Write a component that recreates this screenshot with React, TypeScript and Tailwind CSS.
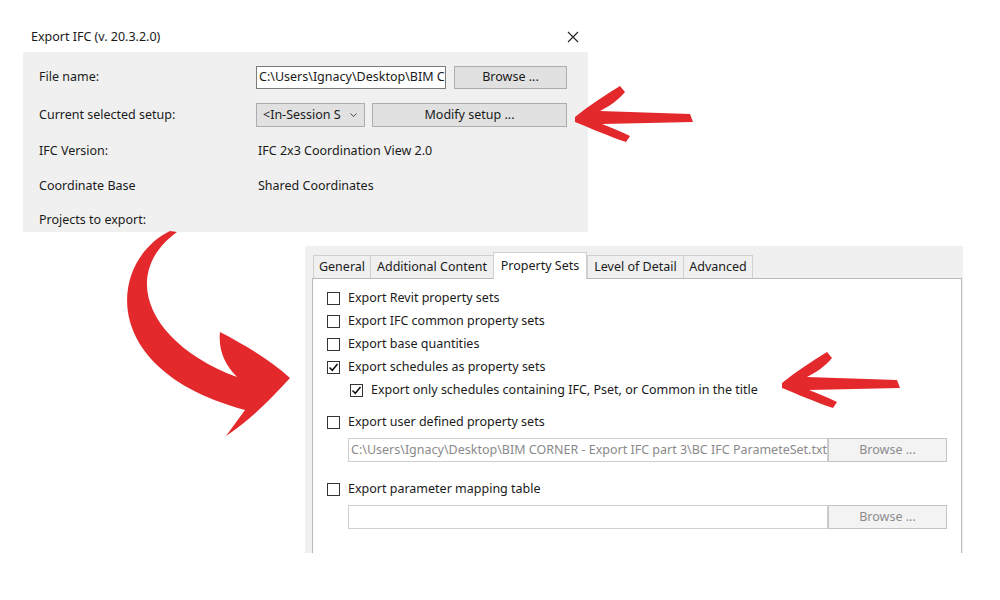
const font = { fontFamily: '"Segoe UI", "Noto Sans", sans-serif' }

function CheckBox({ checked }: { checked?: boolean }) {
  return (
    <span className="flex h-[13px] w-[13px] shrink-0 items-center justify-center border border-[#333] bg-white">
      {checked && (
        <svg width="11" height="11" viewBox="0 0 11 11">
          <path d="M1.5 5.5 L4.3 8.3 L9.5 2" fill="none" stroke="#111" strokeWidth="1.5" />
        </svg>
      )}
    </span>
  )
}

function CheckRow({ label, checked, indent }: { label: string; checked?: boolean; indent?: boolean }) {
  return (
    <div className={`flex h-[23px] items-center gap-[8px] ${indent ? 'pl-[23px]' : ''}`}>
      <CheckBox checked={checked} />
      <span className="whitespace-nowrap">{label}</span>
    </div>
  )
}

function PathField({ value }: { value: string }) {
  return (
    <div className="ml-[21px] flex h-[24px] w-[599px]">
      <div className="flex w-[480px] items-center overflow-hidden whitespace-nowrap border border-[#cfcfcf] bg-white px-[2px] text-[#8a8a8a]">
        {value}
      </div>
      <div className="flex w-[119px] items-center justify-center border border-[#c4c4c4] bg-[#f3f3f3] text-[#8c8c8c]">
        Browse ...
      </div>
    </div>
  )
}

const tabs = ['General', 'Additional Content', 'Property Sets', 'Level of Detail', 'Advanced']
const tabWidths = ['w-[58px]', 'w-[124px]', 'w-[94px]', 'w-[97px]', 'w-[70px]']

function Arrow({ dx, dy }: { dx: number; dy: number }) {
  return (
    <path
      transform={`translate(${dx} ${dy})`}
      d="M575 117 C590 105 605 95 620 86 L625 92 C618 100 610 106 600 111 L690 114 L693 122 L602 124 C612 128 622 132 630 136 L626 142 C608 136 590 128 575 122 Z"
      fill="#e3292c"
    />
  )
}

export default function App() {
  return (
    <div className="relative h-[600px] w-[1000px] overflow-hidden bg-white text-[12.5px] text-[#1a1a1a]" style={font}>
      <div className="ml-[23px] w-[565px] pt-[22px]">
        <div className="flex h-[30px] items-center justify-between pl-[8px] pr-[9px]">
          <span>Export IFC (v. 20.3.2.0)</span>
          <svg width="12" height="12" viewBox="0 0 12 12">
            <path d="M1 1 L11 11 M11 1 L1 11" stroke="#222" strokeWidth="1.1" />
          </svg>
        </div>
        <div className="h-[180px] bg-[#f0f0f0] pl-[16px] pt-[13px]">
          <div className="flex h-[24px] items-center">
            <span className="w-[217px]">File name:</span>
            <div className="flex h-[23px] w-[190px] items-center overflow-hidden whitespace-nowrap border border-[#7a7a7a] bg-white px-[2px]">
              C:\Users\Ignacy\Desktop\BIM CORNER
            </div>
            <div className="ml-[8px] flex h-[23px] w-[113px] items-center justify-center border border-[#adadad] bg-[#e1e1e1]">
              Browse ...
            </div>
          </div>
          <div className="mt-[14px] flex h-[24px] items-center">
            <span className="w-[217px]">Current selected setup:</span>
            <div className="flex h-[24px] w-[109px] items-center justify-between border border-[#adadad] bg-[#e1e1e1] pl-[6px] pr-[7px]">
              <span className="w-[78px] overflow-hidden whitespace-nowrap">&lt;In-Session Setup&gt;</span>
              <svg width="7" height="5" viewBox="0 0 7 5">
                <path d="M0.5 0.5 L3.5 3.5 L6.5 0.5" fill="none" stroke="#444" strokeWidth="1" />
              </svg>
            </div>
            <div className="ml-[7px] flex h-[24px] w-[195px] items-center justify-center border border-[#adadad] bg-[#e1e1e1]">
              Modify setup ...
            </div>
          </div>
          <div className="mt-[12px] flex h-[24px] items-center">
            <span className="w-[219px]">IFC Version:</span>
            <span>IFC 2x3 Coordination View 2.0</span>
          </div>
          <div className="mt-[11px] flex h-[24px] items-center">
            <span className="w-[219px]">Coordinate Base</span>
            <span>Shared Coordinates</span>
          </div>
          <div className="mt-[10px] flex h-[24px] items-center">
            <span>Projects to export:</span>
          </div>
        </div>
      </div>

      <div className="ml-[305px] mt-[14px] flex h-[307px] w-[658px] flex-col bg-[#f0f0f0] pl-[7px] pr-[1px]">
        <div className="flex h-[32px] items-end pl-[1px]">
          {tabs.map((t, i) =>
            i === 2 ? (
              <div
                key={t}
                className={`relative -mb-px flex h-[27px] items-center justify-center border border-b-0 border-[#d0d0d0] bg-white ${tabWidths[i]} z-10`}
              >
                {t}
              </div>
            ) : (
              <div
                key={t}
                className={`flex h-[23px] items-center justify-center border border-b-0 border-[#d0d0d0] bg-[#f0f0f0] ${tabWidths[i]} -mr-px`}
              >
                {t}
              </div>
            ),
          )}
        </div>
        <div className="flex-1 border border-b-0 border-[#b9b9b9] bg-white pl-[14px] pt-[8px]">
          <CheckRow label="Export Revit property sets" />
          <CheckRow label="Export IFC common property sets" />
          <CheckRow label="Export base quantities" />
          <CheckRow label="Export schedules as property sets" checked />
          <CheckRow label="Export only schedules containing IFC, Pset, or Common in the title" checked indent />
          <div className="mt-[9px]">
            <CheckRow label="Export user defined property sets" />
          </div>
          <div className="mt-[4px]">
            <PathField value="C:\Users\Ignacy\Desktop\BIM CORNER - Export IFC part 3\BC IFC ParameteSet.txt" />
          </div>
          <div className="mt-[16px]">
            <CheckRow label="Export parameter mapping table" />
          </div>
          <div className="mt-[4px]">
            <PathField value="" />
          </div>
        </div>
      </div>

      <svg className="pointer-events-none absolute left-0 top-0" width="1000" height="600" viewBox="0 0 1000 600">
        <Arrow dx={0} dy={0} />
        <Arrow dx={207} dy={266} />
        <path
          d="M170 231 C110 260 95 370 245 410 L226 436 C250 420 270 400 290 378 C270 360 245 345 220 332 C218 350 225 365 237 377 C150 345 118 275 177 232 Z"
          fill="#e3292c"
        />
      </svg>
    </div>
  )
}
